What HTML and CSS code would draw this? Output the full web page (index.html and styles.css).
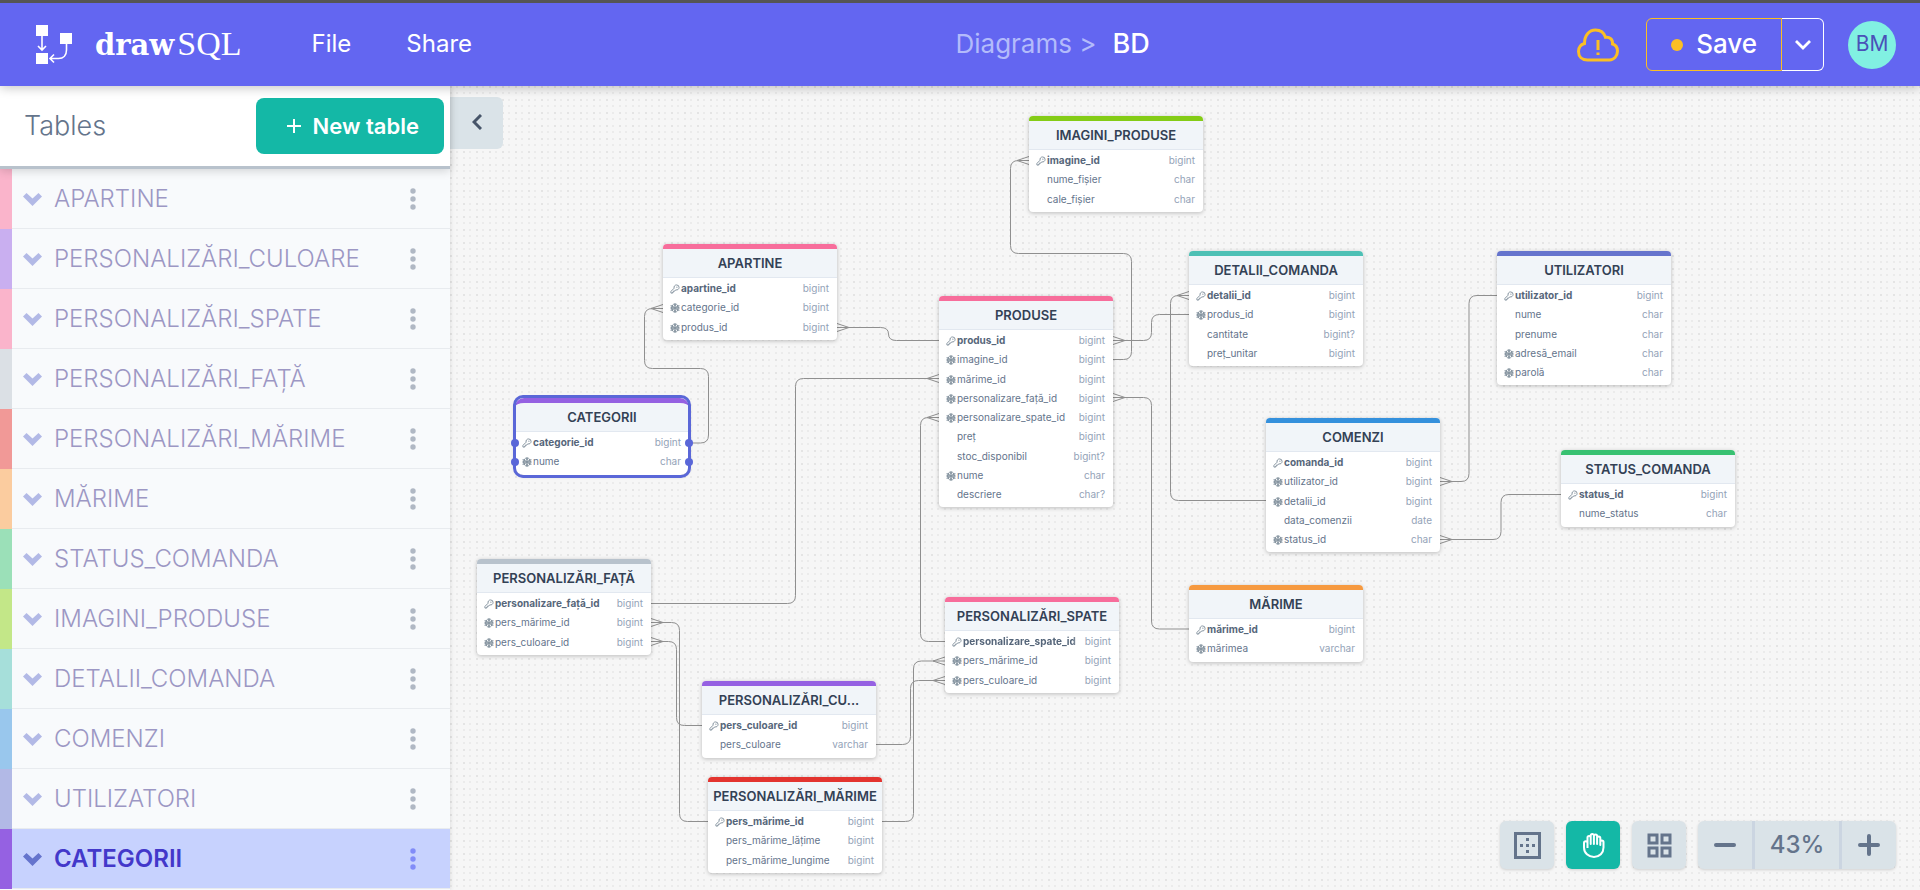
FILE: index.html
```html
<!DOCTYPE html>
<html lang="ro">
<head>
<meta charset="utf-8">
<title>BD - drawSQL</title>
<link rel="stylesheet" href="styles.css">
</head>
<body>
<svg class="sprite" aria-hidden="true">
  <symbol id="key" viewBox="0 0 16 16"><path d="M10.500 1.500a4 4 0 0 1 4 4 4 4 0 0 1-5 3.900L7.600 11H6v1.800H4.300v1.700H1.500v-2.700L6.600 6.700A4 4 0 0 1 10.500 1.500z" fill="none" stroke="currentColor" stroke-width="1.600" stroke-linejoin="round"/><circle cx="11" cy="5" r="1" fill="currentColor"/></symbol>
  <symbol id="flake" viewBox="0 0 16 16"><g fill="none" stroke="currentColor" stroke-width="1.900"><path d="M8 0v16M1 4l14 8M15 4L1 12"/><path d="M5.500 1.500L8 4l2.500-2.500M5.500 14.500L8 12l2.500 2.500M1 7.500l3.600-1L3.600 3M15 7.500l-3.600-1 1-3.500M1 8.500l3.600 1-1 3.500M15 8.500l-3.600 1 1 3.500"/></g></symbol>
  <symbol id="chevron" viewBox="0 0 19 14"><path d="M0 4.500L3.500 1 9.500 6.500 15.500 1 19 4.500 9.500 14z" fill="currentColor"/></symbol>
  <symbol id="dots" viewBox="0 0 6 22"><g fill="currentColor"><circle cx="3" cy="3" r="2.700"/><circle cx="3" cy="11" r="2.700"/><circle cx="3" cy="19" r="2.700"/></g></symbol>
</svg>

<header class="topbar">
  <a class="brand" href="#" aria-label="drawSQL">
    <svg class="brand-mark" viewBox="0 0 36 39" aria-hidden="true">
      <g fill="#fff"><rect width="12" height="11"/><rect x="24" y="8" width="12" height="11"/><rect y="28" width="12" height="11"/></g>
      <g fill="none" stroke="#fff" stroke-width="1.600"><path d="M6 11v14M2 21l4 4 4-4M30.500 19v6c0 5-3 8.500-8 8.500h-8M18 29.500l-4 4 4 4"/></g>
    </svg>
    <span class="brand-name"><b>draw</b><span>SQL</span></span>
  </a>
  <nav class="menu">
    <button type="button">File</button>
    <button type="button">Share</button>
  </nav>
  <div class="crumbs"><a href="#">Diagrams &gt;</a><span>BD</span></div>
  <svg class="cloud" viewBox="0 0 42 34" role="img" aria-label="Unsaved changes">
    <path d="M10.500 32C5 32 1.500 28.500 1.500 23.500c0-4 2.500-7 6-8C7.500 7.500 12 2 18.500 2c5 0 8.500 2.800 10 7.300 4-.8 7.500 2 7 6.700 3 1 5 3.500 5 7 0 5-3.500 9-8 9z" fill="none" stroke="#fbbf24" stroke-width="3"/>
    <path d="M21 12v10M21 24.500v2.500" stroke="#fbbf24" stroke-width="3"/>
  </svg>
  <div class="save-group">
    <button class="save" type="button"><i></i><span>Save</span></button>
    <button class="save-more" type="button" aria-label="Save options"><svg viewBox="0 0 16 10"><path d="M1 1l7 7 7-7" fill="none" stroke="#fff" stroke-width="2.800"/></svg></button>
  </div>
  <button class="avatar" type="button">BM</button>
</header>

<div class="workspace">
  <aside class="sidebar">
    <div class="sidebar-head">
      <h2>Tables</h2>
      <button class="new-table" type="button"><svg viewBox="0 0 16 16" aria-hidden="true"><path d="M8 1v14M1 8h14" stroke="#fff" stroke-width="2"/></svg>New table</button>
    </div>
    <ul class="table-list">
      <li class="pink"><svg class="chev"><use href="#chevron"/></svg><span>APARTINE</span><button type="button" aria-label="Options"><svg><use href="#dots"/></svg></button></li>
      <li class="purple"><svg class="chev"><use href="#chevron"/></svg><span>PERSONALIZĂRI_CULOARE</span><button type="button" aria-label="Options"><svg><use href="#dots"/></svg></button></li>
      <li class="pink"><svg class="chev"><use href="#chevron"/></svg><span>PERSONALIZĂRI_SPATE</span><button type="button" aria-label="Options"><svg><use href="#dots"/></svg></button></li>
      <li class="gray"><svg class="chev"><use href="#chevron"/></svg><span>PERSONALIZĂRI_FAȚĂ</span><button type="button" aria-label="Options"><svg><use href="#dots"/></svg></button></li>
      <li class="red"><svg class="chev"><use href="#chevron"/></svg><span>PERSONALIZĂRI_MĂRIME</span><button type="button" aria-label="Options"><svg><use href="#dots"/></svg></button></li>
      <li class="orange"><svg class="chev"><use href="#chevron"/></svg><span>MĂRIME</span><button type="button" aria-label="Options"><svg><use href="#dots"/></svg></button></li>
      <li class="green"><svg class="chev"><use href="#chevron"/></svg><span>STATUS_COMANDA</span><button type="button" aria-label="Options"><svg><use href="#dots"/></svg></button></li>
      <li class="lime"><svg class="chev"><use href="#chevron"/></svg><span>IMAGINI_PRODUSE</span><button type="button" aria-label="Options"><svg><use href="#dots"/></svg></button></li>
      <li class="teal"><svg class="chev"><use href="#chevron"/></svg><span>DETALII_COMANDA</span><button type="button" aria-label="Options"><svg><use href="#dots"/></svg></button></li>
      <li class="blue"><svg class="chev"><use href="#chevron"/></svg><span>COMENZI</span><button type="button" aria-label="Options"><svg><use href="#dots"/></svg></button></li>
      <li class="indigo"><svg class="chev"><use href="#chevron"/></svg><span>UTILIZATORI</span><button type="button" aria-label="Options"><svg><use href="#dots"/></svg></button></li>
      <li class="purple active"><svg class="chev"><use href="#chevron"/></svg><span>CATEGORII</span><button type="button" aria-label="Options"><svg><use href="#dots"/></svg></button></li>
    </ul>
  </aside>

  <main class="canvas">
    <svg class="links" aria-hidden="true">
      <g transform="translate(-450 -86)">
        <path d="M663 308.500H652.500q-8 0-8 8V360.500q0 8 8 8H700.500q8 0 8 8V435q0 8-8 8H690"/>
        <path d="M837 327.500H880.500q8 0 8 6.500t8 6.500H939"/>
        <path d="M1113 340.500H1143.500q8 0 8-8V322.500q0-8 8-8H1189"/>
        <path d="M1113 359.500H1123.500q8 0 8-8V261.500q0-8-8-8H1018.500q-8 0-8-8V168.500q0-8 8-8H1029"/>
        <path d="M1189 295.500H1178.500q-8 0-8 8V492.500q0 8 8 8H1266"/>
        <path d="M939 378.500H803.500q-8 0-8 8V595.500q0 8-8 8H651"/>
        <path d="M1113 397.500H1143.500q8 0 8 8V621q0 8 8 8H1189"/>
        <path d="M939 417.500H928.500q-8 0-8 8V633.500q0 8 8 8H945"/>
        <path d="M1497 295.500H1477q-8 0-8 8V473.500q0 8-8 8H1440"/>
        <path d="M1561 494.500H1509q-8 0-8 8V531.500q0 8-8 8H1440"/>
        <path d="M651 622.500H671.500q8 0 8 8V813.500q0 8 8 8H708"/>
        <path d="M651 641.500H668.500q8 0 8 8V717.500q0 8 8 8H702"/>
        <path d="M876 744.500H902.500q8 0 8-8V688.500q0-8 8-8H945"/>
        <path d="M882 821.500H905.500q8 0 8-8V669q0-8 8-8H945"/>
        <path d="M663 304.500l-12 4 12 4M837 323.500l12 4-12 4M939 374.500l-12 4 12 4M939 413.500l-12 4 12 4M1113 336.500l12 4-12 4M1113 393.500l12 4-12 4M1029 156.500l-12 4 12 4M1189 291.500l-12 4 12 4M1440 477.500l12 4-12 4M1440 535.500l12 4-12 4M651 618.500l12 4-12 4M651 637.500l12 4-12 4M945 657l-12 4 12 4M945 676.500l-12 4 12 4"/>
      </g>
    </svg>

    <table class="node at-imagini lime"><caption>IMAGINI_PRODUSE</caption><tbody>
      <tr class="pk"><th scope="row"><svg><use href="#key"/></svg>imagine_id</th><td>bigint</td></tr>
      <tr><th scope="row">nume_fișier</th><td>char</td></tr>
      <tr><th scope="row">cale_fișier</th><td>char</td></tr>
    </tbody></table>

    <table class="node at-apartine pink"><caption>APARTINE</caption><tbody>
      <tr class="pk"><th scope="row"><svg><use href="#key"/></svg>apartine_id</th><td>bigint</td></tr>
      <tr><th scope="row"><svg><use href="#flake"/></svg>categorie_id</th><td>bigint</td></tr>
      <tr><th scope="row"><svg><use href="#flake"/></svg>produs_id</th><td>bigint</td></tr>
    </tbody></table>

    <table class="node at-categorii purple selected"><caption>CATEGORII</caption><tbody>
      <tr class="pk"><th scope="row"><svg><use href="#key"/></svg>categorie_id</th><td>bigint</td></tr>
      <tr><th scope="row"><svg><use href="#flake"/></svg>nume</th><td>char</td></tr>
    </tbody></table>

    <table class="node at-produse pink"><caption>PRODUSE</caption><tbody>
      <tr class="pk"><th scope="row"><svg><use href="#key"/></svg>produs_id</th><td>bigint</td></tr>
      <tr><th scope="row"><svg><use href="#flake"/></svg>imagine_id</th><td>bigint</td></tr>
      <tr><th scope="row"><svg><use href="#flake"/></svg>mărime_id</th><td>bigint</td></tr>
      <tr><th scope="row"><svg><use href="#flake"/></svg>personalizare_față_id</th><td>bigint</td></tr>
      <tr><th scope="row"><svg><use href="#flake"/></svg>personalizare_spate_id</th><td>bigint</td></tr>
      <tr><th scope="row">preț</th><td>bigint</td></tr>
      <tr><th scope="row">stoc_disponibil</th><td>bigint?</td></tr>
      <tr><th scope="row"><svg><use href="#flake"/></svg>nume</th><td>char</td></tr>
      <tr><th scope="row">descriere</th><td>char?</td></tr>
    </tbody></table>

    <table class="node at-detalii teal"><caption>DETALII_COMANDA</caption><tbody>
      <tr class="pk"><th scope="row"><svg><use href="#key"/></svg>detalii_id</th><td>bigint</td></tr>
      <tr><th scope="row"><svg><use href="#flake"/></svg>produs_id</th><td>bigint</td></tr>
      <tr><th scope="row">cantitate</th><td>bigint?</td></tr>
      <tr><th scope="row">preț_unitar</th><td>bigint</td></tr>
    </tbody></table>

    <table class="node at-utilizatori indigo"><caption>UTILIZATORI</caption><tbody>
      <tr class="pk"><th scope="row"><svg><use href="#key"/></svg>utilizator_id</th><td>bigint</td></tr>
      <tr><th scope="row">nume</th><td>char</td></tr>
      <tr><th scope="row">prenume</th><td>char</td></tr>
      <tr><th scope="row"><svg><use href="#flake"/></svg>adresă_email</th><td>char</td></tr>
      <tr><th scope="row"><svg><use href="#flake"/></svg>parolă</th><td>char</td></tr>
    </tbody></table>

    <table class="node at-comenzi blue"><caption>COMENZI</caption><tbody>
      <tr class="pk"><th scope="row"><svg><use href="#key"/></svg>comanda_id</th><td>bigint</td></tr>
      <tr><th scope="row"><svg><use href="#flake"/></svg>utilizator_id</th><td>bigint</td></tr>
      <tr><th scope="row"><svg><use href="#flake"/></svg>detalii_id</th><td>bigint</td></tr>
      <tr><th scope="row">data_comenzii</th><td>date</td></tr>
      <tr><th scope="row"><svg><use href="#flake"/></svg>status_id</th><td>char</td></tr>
    </tbody></table>

    <table class="node at-status green"><caption>STATUS_COMANDA</caption><tbody>
      <tr class="pk"><th scope="row"><svg><use href="#key"/></svg>status_id</th><td>bigint</td></tr>
      <tr><th scope="row">nume_status</th><td>char</td></tr>
    </tbody></table>

    <table class="node at-marime orange"><caption>MĂRIME</caption><tbody>
      <tr class="pk"><th scope="row"><svg><use href="#key"/></svg>mărime_id</th><td>bigint</td></tr>
      <tr><th scope="row"><svg><use href="#flake"/></svg>mărimea</th><td>varchar</td></tr>
    </tbody></table>

    <table class="node at-fata gray"><caption>PERSONALIZĂRI_FAȚĂ</caption><tbody>
      <tr class="pk"><th scope="row"><svg><use href="#key"/></svg>personalizare_față_id</th><td>bigint</td></tr>
      <tr><th scope="row"><svg><use href="#flake"/></svg>pers_mărime_id</th><td>bigint</td></tr>
      <tr><th scope="row"><svg><use href="#flake"/></svg>pers_culoare_id</th><td>bigint</td></tr>
    </tbody></table>

    <table class="node at-spate pink"><caption>PERSONALIZĂRI_SPATE</caption><tbody>
      <tr class="pk faded"><th scope="row"><svg><use href="#key"/></svg>personalizare_spate_id</th><td>bigint</td></tr>
      <tr><th scope="row"><svg><use href="#flake"/></svg>pers_mărime_id</th><td>bigint</td></tr>
      <tr><th scope="row"><svg><use href="#flake"/></svg>pers_culoare_id</th><td>bigint</td></tr>
    </tbody></table>

    <table class="node at-culoare purple"><caption>PERSONALIZĂRI_CU...</caption><tbody>
      <tr class="pk"><th scope="row"><svg><use href="#key"/></svg>pers_culoare_id</th><td>bigint</td></tr>
      <tr><th scope="row">pers_culoare</th><td>varchar</td></tr>
    </tbody></table>

    <table class="node at-pers-marime red"><caption>PERSONALIZĂRI_MĂRIME</caption><tbody>
      <tr class="pk"><th scope="row"><svg><use href="#key"/></svg>pers_mărime_id</th><td>bigint</td></tr>
      <tr><th scope="row">pers_mărime_lățime</th><td>bigint</td></tr>
      <tr><th scope="row">pers_mărime_lungime</th><td>bigint</td></tr>
    </tbody></table>

    <button class="collapse" type="button" aria-label="Collapse sidebar"><svg viewBox="0 0 10 16"><path d="M9 1L2 8l7 7" fill="none" stroke="#475569" stroke-width="3"/></svg></button>

    <div class="tools">
      <button class="tool" type="button" aria-label="Select area"><svg viewBox="0 0 27 27"><rect x="1.500" y="1.500" width="24" height="24" fill="none" stroke="currentColor" stroke-width="3"/><path d="M12 6h3v3h-3zM12 12h3v3h-3zM12 18h3v3h-3zM6 12h3v3H6zM18 12h3v3h-3z" fill="currentColor"/></svg></button>
      <button class="tool on" type="button" aria-label="Pan"><svg viewBox="0 0 27 27"><path d="M7.500 16V5.500a1.600 1.600 0 0 1 3.200 0V12 3.500a1.600 1.600 0 0 1 3.200 0V12 4a1.600 1.600 0 0 1 3.200 0v8V6a1.600 1.600 0 0 1 3.200 0v7V10a1.600 1.600 0 0 1 3.200 0V15.500c0 5.500-4 9.500-9.500 9.500S4 21 4 15.500v-4.500a1.700 1.700 0 0 1 3.500 0" fill="none" stroke="currentColor" stroke-width="2" stroke-linejoin="round"/></svg></button>
      <button class="tool" type="button" aria-label="Grid"><svg viewBox="0 0 27 27"><path d="M3 3h8v8H3zM16 3h8v8h-8zM3 16h8v8H3zM16 16h8v8h-8z" fill="none" stroke="currentColor" stroke-width="3"/></svg></button>
      <div class="zoom">
        <button type="button" aria-label="Zoom out"><svg viewBox="0 0 22 22"><path d="M2 11h18" stroke="currentColor" stroke-width="4" stroke-linecap="round"/></svg></button>
        <output>43%</output>
        <button type="button" aria-label="Zoom in"><svg viewBox="0 0 22 22"><path d="M2 11h18M11 2v18" stroke="currentColor" stroke-width="4" stroke-linecap="round"/></svg></button>
      </div>
    </div>
  </main>
</div>
</body>
</html>
```
FILE: styles.css
```css
* { box-sizing: border-box; }
html, body { height: 100%; }
body {
  margin: 0;
  display: flex;
  flex-direction: column;
  overflow: hidden;
  font-family: Inter, "Liberation Sans", sans-serif;
  background: #f5f5f5;
}
button { font: inherit; border: 0; padding: 0; background: none; cursor: pointer; }
a { text-decoration: none; color: inherit; }
svg { display: block; flex: none; }
.sprite { position: absolute; width: 0; height: 0; }

.lime { --c: #84cc16; --soft: #c3e788; }
.pink { --c: #f76d9b; --soft: #fab4cb; }
.purple { --c: #9561e2; --soft: #c9aff0; }
.teal { --c: #4dc0b5; --soft: #a6dfda; }
.indigo { --c: #6574cd; --soft: #b2b9e6; }
.blue { --c: #3490dc; --soft: #99c7ed; }
.green { --c: #38c172; --soft: #9be0b8; }
.orange { --c: #f6993f; --soft: #fbcc9f; }
.gray { --c: #b8c2cc; --soft: #dbe0e5; }
.red { --c: #e3342f; --soft: #f19997; }

/* top bar */
.topbar {
  position: relative;
  z-index: 3;
  flex: none;
  display: flex;
  align-items: center;
  height: 86px;
  padding: 0 24px 0 36px;
  border-top: 3px solid #555;
  background: #6366f1;
  color: #fff;
  box-shadow: 0 2px 10px rgba(0, 0, 0, .22);
}
.brand { display: flex; align-items: center; gap: 23px; }
.brand-mark { width: 36px; height: 39px; }
.brand-name { display: flex; gap: 3px; align-items: baseline; line-height: 40px; }
.brand-name b { font: 700 29px/40px "DejaVu Serif", serif; }
.brand-name span { font: 400 34px/40px "Liberation Serif", serif; }
.menu { display: flex; gap: 55px; margin-left: 70px; padding-bottom: 2px; font-size: 24px; font-weight: 400; }
.menu button { color: #fff; }
.crumbs {
  flex: 1;
  display: flex;
  justify-content: center;
  gap: 16px;
  padding: 0 0 2px 56px;
  font-size: 26px;
}
.crumbs a { color: #b3bbfb; }
.crumbs span { font-size: 27px; font-weight: 500; line-height: 31px; }
.cloud { width: 42px; height: 34px; margin-right: 27px; }
.save-group { display: flex; height: 53px; margin-right: 24px; }
.save {
  display: flex;
  align-items: center;
  gap: 13px;
  padding: 0 24px;
  border: 1px solid #fbbf24;
  border-radius: 6px 0 0 6px;
  color: #fff;
  font-size: 26px;
  font-weight: 500;
}
.save i { width: 12px; height: 12px; border-radius: 50%; background: #fbbf24; }
.save span { padding-bottom: 2px; }
.save-more {
  display: grid;
  place-items: center;
  width: 42px;
  border: 1px solid #fff;
  border-left: 0;
  border-radius: 0 6px 6px 0;
}
.save-more svg { width: 16px; height: 10px; }
.avatar {
  width: 48px;
  height: 48px;
  padding-bottom: 2px;
  border-radius: 50%;
  background: #81f0e2;
  color: #4a51b8;
  font-size: 21px;
}

/* sidebar */
.workspace { flex: 1; display: flex; min-height: 0; }
.sidebar {
  position: relative;
  z-index: 2;
  flex: none;
  display: flex;
  flex-direction: column;
  width: 450px;
  background: #f8fafc;
  box-shadow: 0 0 5px rgba(0, 0, 0, .12);
}
.sidebar-head {
  position: relative;
  z-index: 1;
  display: flex;
  align-items: center;
  justify-content: space-between;
  padding: 12px 6px 12px 24px;
  border-bottom: 3px solid #b8c2cc;
  background: #fff;
  box-shadow: 0 2px 9px rgba(0, 0, 0, .16);
}
.sidebar-head h2 { margin: 0; padding-bottom: 2px; font-size: 27px; font-weight: 300; color: #64748b; }
.new-table {
  display: flex;
  align-items: center;
  gap: 11px;
  height: 56px;
  padding: 0 25px 0 30px;
  border-radius: 8px;
  background: #14b8a6;
  color: #fff;
  font-size: 22px;
  font-weight: 600;
}
.new-table svg { width: 16px; height: 16px; }
.table-list { flex: 1; min-height: 0; margin: 0; padding: 0; overflow: hidden; list-style: none; }
.table-list li {
  display: flex;
  align-items: center;
  height: 60px;
  padding-right: 28px;
  border-left: 12px solid var(--soft);
  box-shadow: inset 0 -1px #e8ebef;
  font-size: 24px;
  font-weight: 300;
  color: #9c97c4;
}
.chev { width: 19px; height: 14px; margin: 0 12px 0 11px; color: #b2b9e6; }
.table-list span { flex: 1; padding-bottom: 2px; }
.table-list button { width: 18px; height: 30px; display: grid; place-items: center; color: #b0b8c4; }
.table-list button svg { width: 6px; height: 22px; }
.table-list .active { border-left-color: var(--c); background: #c7d2fe; color: #4338ca; font-weight: 600; }
.active .chev { color: #6574cd; }
.table-list .active button { color: #818cf8; }

/* diagram */
.canvas {
  position: relative;
  flex: 1;
  overflow: hidden;
  background-color: #f6f6f6;
  background-image:
    radial-gradient(circle at 1px 1px, #e4e4e4 1px, transparent 1px),
    radial-gradient(circle at 7px 1px, #ebebeb 1px, transparent 1px),
    radial-gradient(circle at 1px 7px, #ebebeb 1px, transparent 1px),
    radial-gradient(circle at 7px 7px, #ebebeb 1px, transparent 1px);
  background-size: 13px 13px;
}
.links { position: absolute; inset: 0; width: 100%; height: 100%; fill: none; stroke: #8f8f8f; }
.node {
  position: absolute;
  display: block;
  width: 174px;
  padding: 0 0 3px;
  border-spacing: 0;
  border-radius: 4px;
  background: #fff;
  box-shadow: 0 1px 4px rgba(0, 0, 0, .24);
}
.node caption {
  display: block;
  height: 34px;
  border-top: 5px solid var(--c);
  border-bottom: 1px solid #e2e8f0;
  border-radius: 4px 4px 0 0;
  background: #f1f5f9;
  font-size: 13px;
  font-weight: 600;
  line-height: 29px;
  text-align: center;
  white-space: nowrap;
  color: #334155;
}
.node tbody { display: block; padding: 1px 8px 0 18px; }
.node tr { display: flex; height: 19px; font-size: 10px; line-height: 19px; }
.node tr:nth-child(4n + 2) { height: 20px; }
.node th { position: relative; flex: 1; padding: 0; text-align: left; font-weight: 400; color: #64748b; white-space: nowrap; }
.node td { padding: 0; color: #94a3b8; }
.node .pk th { font-weight: 700; color: #56667a; }
.node th svg { position: absolute; left: -11px; top: 5px; width: 10px; height: 10px; color: #8795a1; }
.node .faded th {
  min-width: 0;
  margin: 0 4px 0 -11px;
  padding-left: 11px;
  overflow: hidden;
  -webkit-mask: linear-gradient(to left, transparent, #000 8px);
  mask: linear-gradient(to left, transparent, #000 8px);
}
.node .faded svg { left: 0; }

.at-imagini { left: 579px; top: 30px; }
.at-apartine { left: 213px; top: 158px; }
.at-categorii { left: 65px; top: 312px; }
.at-produse { left: 489px; top: 210px; }
.at-detalii { left: 739px; top: 165px; }
.at-utilizatori { left: 1047px; top: 165px; }
.at-comenzi { left: 816px; top: 332px; }
.at-status { left: 1111px; top: 364px; }
.at-marime { left: 739px; top: 499px; }
.at-fata { left: 27px; top: 473px; }
.at-spate { left: 495px; top: 511px; }
.at-culoare { left: 252px; top: 595px; }
.at-pers-marime { left: 258px; top: 691px; }

.selected::before {
  content: "";
  position: absolute;
  inset: -3px -2px;
  border: 3px solid #5a67d8;
  border-radius: 10px;
}
.selected { border-radius: 9px; }
.selected caption { border-radius: 9px 9px 0 0; }
.selected tr { position: relative; }
.selected tr::before, .selected tr::after {
  content: "";
  position: absolute;
  top: 6px;
  width: 8px;
  height: 8px;
  border-radius: 50%;
  background: #5a67d8;
}
.selected tr::before { left: -22px; }
.selected tr::after { right: -12px; }

.collapse {
  position: absolute;
  left: 0;
  top: 11px;
  display: grid;
  place-items: center;
  width: 53px;
  height: 52px;
  padding-bottom: 2px;
  border-radius: 0 6px 6px 0;
  background: #dae3e8;
}
.collapse svg { width: 10px; height: 16px; }

.tools { position: absolute; right: 24px; bottom: 21px; display: flex; gap: 12px; color: #64748b; }
.tool, .zoom { height: 48px; border-radius: 6px; background: #dae3e8; box-shadow: 0 1px 3px rgba(0, 0, 0, .16); color: #64748b; }
.tool { display: grid; place-items: center; width: 54px; }
.tool svg { width: 27px; height: 27px; }
.tool.on { background: #14b8a6; color: #fff; }
.zoom { display: flex; align-items: center; }
.zoom button { display: grid; place-items: center; width: 54px; height: 48px; color: #64748b; }
.zoom svg { width: 22px; height: 22px; }
.zoom output {
  width: 90px;
  border: solid #cbd5e1;
  border-width: 0 3px;
  font-size: 24px;
  font-weight: 500;
  line-height: 48px;
  text-align: center;
}
```
